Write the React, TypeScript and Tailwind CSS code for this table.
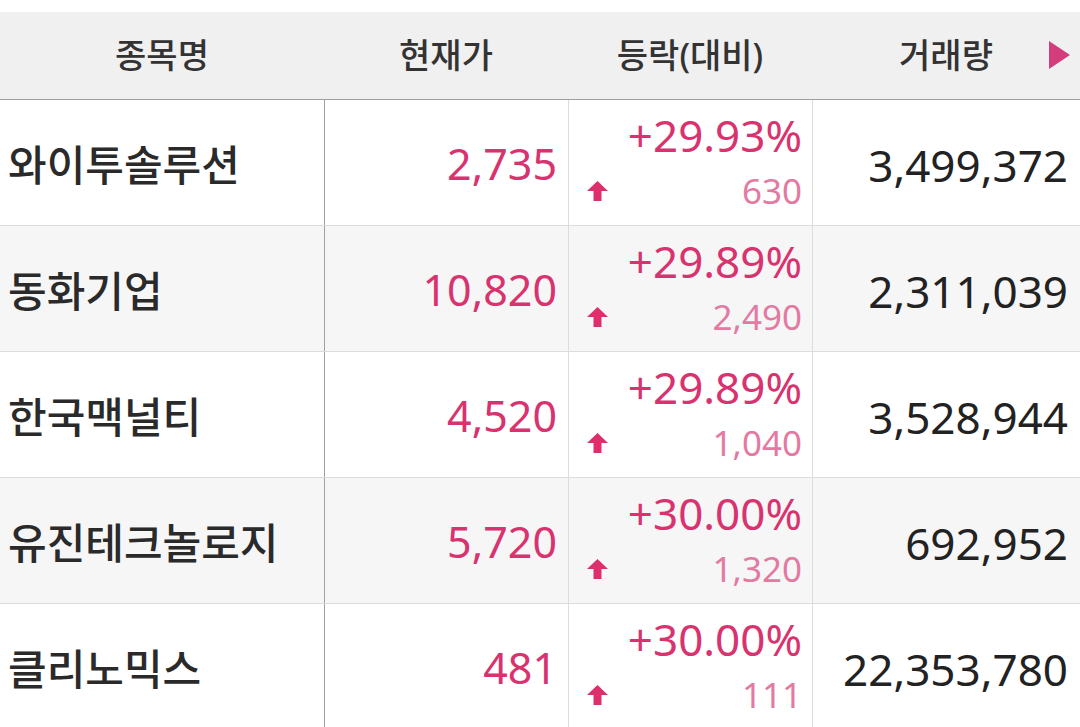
import React from "react";

const rows = [
  { name: "와이투솔루션", price: "2,735", pct: "+29.93%", diff: "630", vol: "3,499,372" },
  { name: "동화기업", price: "10,820", pct: "+29.89%", diff: "2,490", vol: "2,311,039" },
  { name: "한국맥널티", price: "4,520", pct: "+29.89%", diff: "1,040", vol: "3,528,944" },
  { name: "유진테크놀로지", price: "5,720", pct: "+30.00%", diff: "1,320", vol: "692,952" },
  { name: "클리노믹스", price: "481", pct: "+30.00%", diff: "111", vol: "22,353,780" },
];

const UpArrow = () => (
  <svg width="23" height="22" viewBox="0 0 23 22" className="shrink-0">
    <path d="M11.5 1 L22 11 L15.5 11 L15.5 21 L7.5 21 L7.5 11 L1 11 Z" fill="#dc2f6e" />
  </svg>
);

const App = () => {
  return (
    <div
      className="w-[1080px] h-[727px] overflow-hidden bg-white pt-3 text-[#2a2a2a]"
      style={{ fontFamily: '"Noto Sans", "Noto Sans CJK KR", sans-serif' }}
    >
      {/* header */}
      <div className="grid grid-cols-[324px_244px_244px_268px] h-[88px] bg-[#f0f0f0] border-b border-[#9e9e9e] text-[34px] font-medium text-[#333]">
        <div className="flex items-center justify-center">종목명</div>
        <div className="flex items-center justify-center">현재가</div>
        <div className="flex items-center justify-center">등락(대비)</div>
        <div className="relative flex items-center justify-center">
          거래량
          <svg width="26" height="30" viewBox="0 0 26 30" className="absolute right-[8px] top-[28px]">
            <path d="M3 1 L24 15 L3 29 Z" fill="#d43d7c" />
          </svg>
        </div>
      </div>

      {/* rows */}
      {rows.map((r, i) => (
        <div
          key={r.name}
          className={`grid grid-cols-[324px_244px_244px_268px] h-[126px] border-b border-[#dcdcdc] ${
            i % 2 === 1 ? "bg-[#f7f6f7]" : "bg-white"
          }`}
        >
          <div className="flex items-center pl-2 pt-1 text-[42px] font-medium text-[#2a2a2a]">{r.name}</div>
          <div className="flex items-center justify-end pr-[11px] pt-1 border-l border-[#a0a0a0] text-[43px] text-[#d8336f]">
            {r.price}
          </div>
          <div className="flex flex-col pt-[10px] pl-[17px] pr-[10px] border-l border-[#dcdcdc]">
            <div className="text-right text-[44px] leading-[50px] text-[#d8336f]">{r.pct}</div>
            <div className="flex items-center justify-between mt-[10px] h-[42px]">
              <UpArrow />
              <span className="text-[35px] leading-[42px] text-[#e37aa2]">{r.diff}</span>
            </div>
          </div>
          <div className="flex items-center justify-end pr-3 pt-1 border-l border-[#dcdcdc] text-[44px] text-[#222]">
            {r.vol}
          </div>
        </div>
      ))}
    </div>
  );
};

export default App;
